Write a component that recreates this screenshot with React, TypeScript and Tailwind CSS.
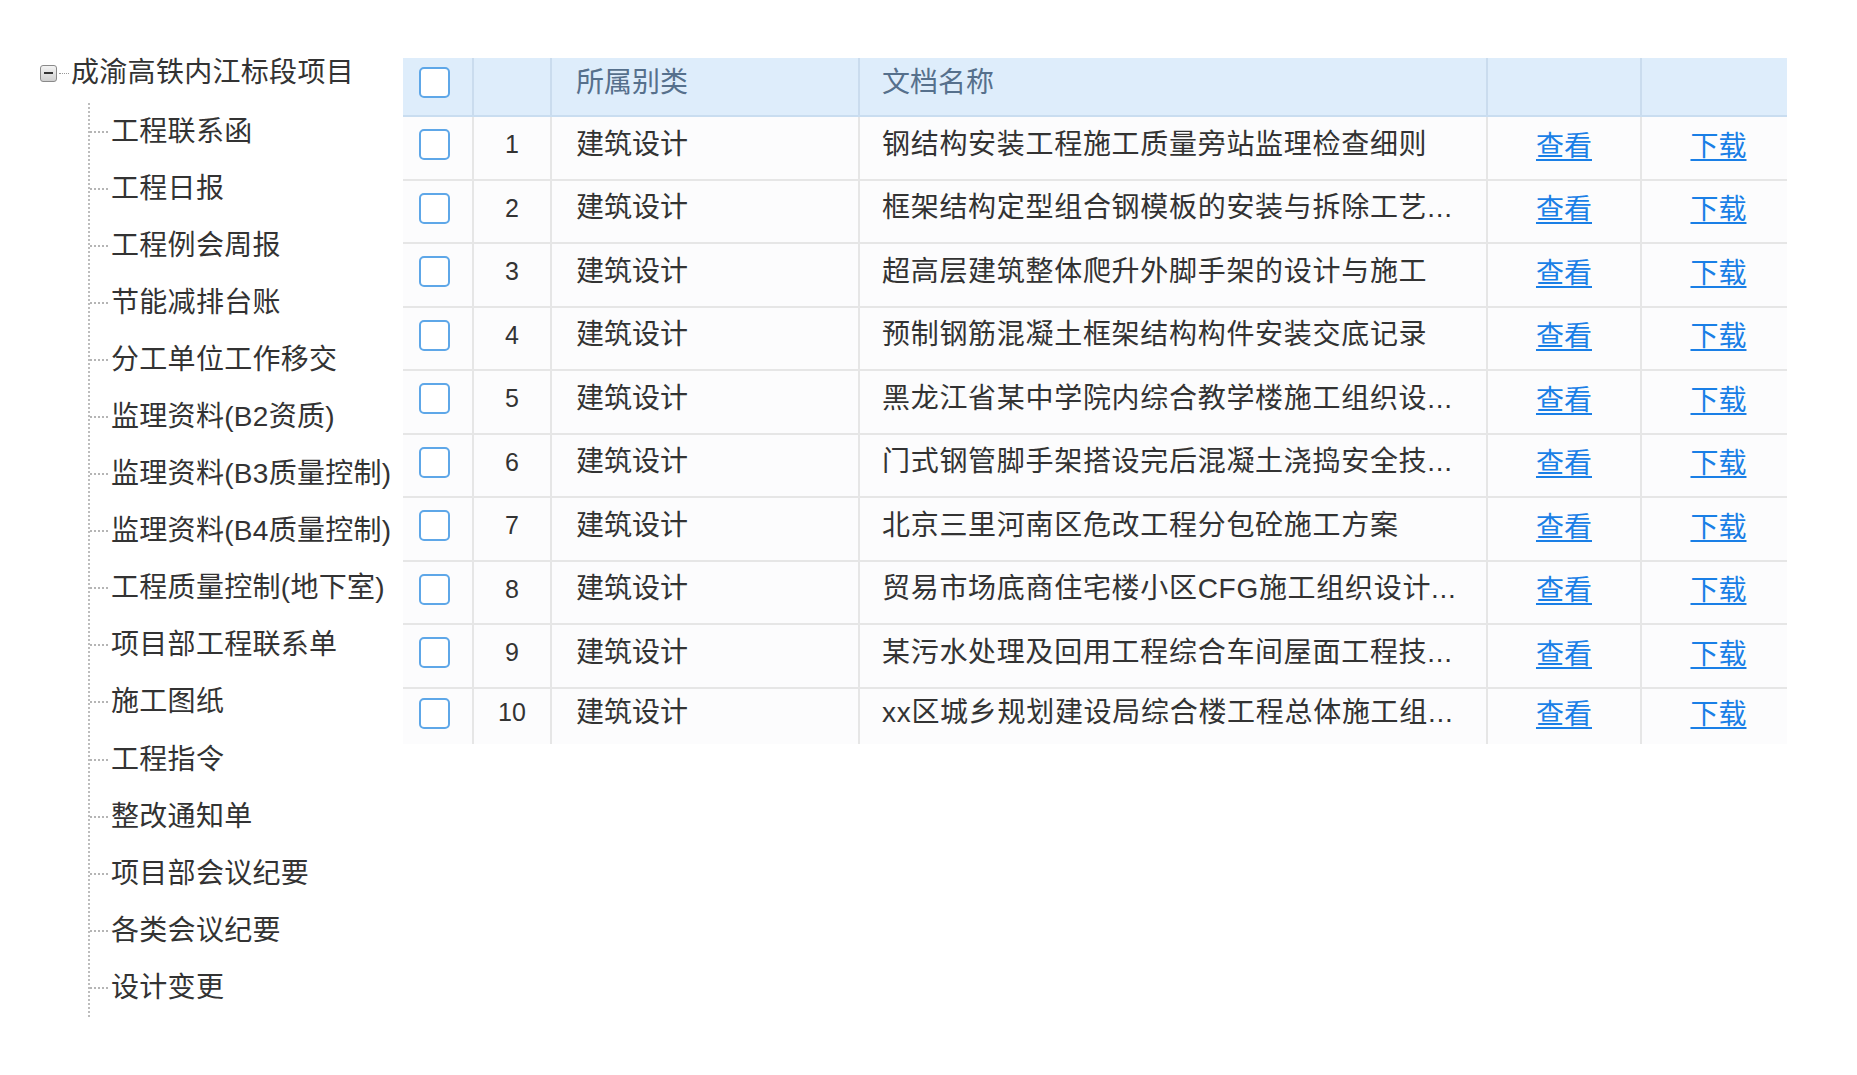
import React from "react";

const treeItems = [
  "工程联系函",
  "工程日报",
  "工程例会周报",
  "节能减排台账",
  "分工单位工作移交",
  "监理资料(B2资质)",
  "监理资料(B3质量控制)",
  "监理资料(B4质量控制)",
  "工程质量控制(地下室)",
  "项目部工程联系单",
  "施工图纸",
  "工程指令",
  "整改通知单",
  "项目部会议纪要",
  "各类会议纪要",
  "设计变更",
];

const docs = [
  "钢结构安装工程施工质量旁站监理检查细则",
  "框架结构定型组合钢模板的安装与拆除工艺...",
  "超高层建筑整体爬升外脚手架的设计与施工",
  "预制钢筋混凝土框架结构构件安装交底记录",
  "黑龙江省某中学院内综合教学楼施工组织设...",
  "门式钢管脚手架搭设完后混凝土浇捣安全技...",
  "北京三里河南区危改工程分包砼施工方案",
  "贸易市场底商住宅楼小区CFG施工组织设计...",
  "某污水处理及回用工程综合车间屋面工程技...",
  "xx区城乡规划建设局综合楼工程总体施工组...",
];

const font = { fontFamily: '"Liberation Sans", "Noto Sans CJK SC", sans-serif' };

function CheckBox() {
  return <span className="block h-[31px] w-[31px] rounded-[5px] border-2 border-[#5ea7e8] bg-white" />;
}

function Tree() {
  return (
    <div className="w-[403px] shrink-0 pl-[40px] pt-[58px] text-[#333]">
      <div className="flex h-[30px] items-center">
        <span className="relative flex h-[17px] w-[17px] items-center justify-center rounded-[3px] border border-[#8a8a8a] bg-gradient-to-b from-[#f4f4f4] to-[#cfcfcf]">
          <span className="block h-[2px] w-[9px] bg-[#333]" />
        </span>
        <span className="mx-[2px] w-[10px] border-t border-dotted border-[#999]" />
        <span className="text-[28px] leading-none tracking-[0.3px]">成渝高铁内江标段项目</span>
      </div>
      <div className="ml-[48px] mt-[15px] border-l-2 border-dotted border-[#bdbdbd]">
        {treeItems.map((t) => (
          <div key={t} className="flex h-[57.1px] items-center">
            <span className="w-[18px] border-t-2 border-dotted border-[#b5b5b5]" />
            <span className="ml-[3px] whitespace-nowrap text-[28px] leading-none tracking-[0.3px]">{t}</span>
          </div>
        ))}
      </div>
    </div>
  );
}

const cols = "grid grid-cols-[71px_78px_308px_628px_154px_145px]";

function DocTable() {
  return (
    <div className="mt-[58px] w-[1384px]">
      <div className={`${cols} h-[59px] border-b-2 border-[#c9ddf0] bg-[#deedfb] text-[28px] text-[#56708c]`}>
        <div className="flex items-center border-r-2 border-[#cadcee] pb-[8px] pl-[16px]">
          <CheckBox />
        </div>
        <div className="border-r-2 border-[#cadcee]" />
        <div className="flex items-center border-r-2 border-[#cadcee] pb-[8px] pl-[24px]">所属别类</div>
        <div className="flex items-center border-r-2 border-[#cadcee] pb-[8px] pl-[22px]">文档名称</div>
        <div className="border-r-2 border-[#cadcee]" />
        <div />
      </div>
      {docs.map((d, i) => {
        const last = i === docs.length - 1;
        return (
          <div
            key={i}
            className={`${cols} bg-[#fcfcfd] text-[#333] ${last ? "h-[55px]" : "h-[63.5px] border-b-2 border-[#e6e6e6]"}`}
          >
            <div className="flex items-center border-r-2 border-[#e6e6e6] pb-[6px] pl-[16px]">
              <CheckBox />
            </div>
            <div className="flex items-center justify-center border-r-2 border-[#e6e6e6] pb-[6px] text-[25px]">
              {i + 1}
            </div>
            <div className="flex items-center border-r-2 border-[#e6e6e6] pb-[6px] pl-[24px] text-[28px]">建筑设计</div>
            <div className="flex items-center overflow-hidden whitespace-nowrap border-r-2 border-[#e6e6e6] pb-[6px] pl-[22px] text-[28px] tracking-[0.7px]">
              {d}
            </div>
            <div className="flex items-center justify-center border-r-2 border-[#e6e6e6] pb-[2px]">
              <a href="#" className="text-[28px] text-[#1a7fe6] underline underline-offset-[3px]">查看</a>
            </div>
            <div className="flex items-center justify-center pb-[2px] pl-[8px]">
              <a href="#" className="text-[28px] text-[#1a7fe6] underline underline-offset-[3px]">下载</a>
            </div>
          </div>
        );
      })}
    </div>
  );
}

export default function App() {
  return (
    <div className="flex h-[1075px] w-[1857px] bg-white" style={font}>
      <Tree />
      <DocTable />
    </div>
  );
}
